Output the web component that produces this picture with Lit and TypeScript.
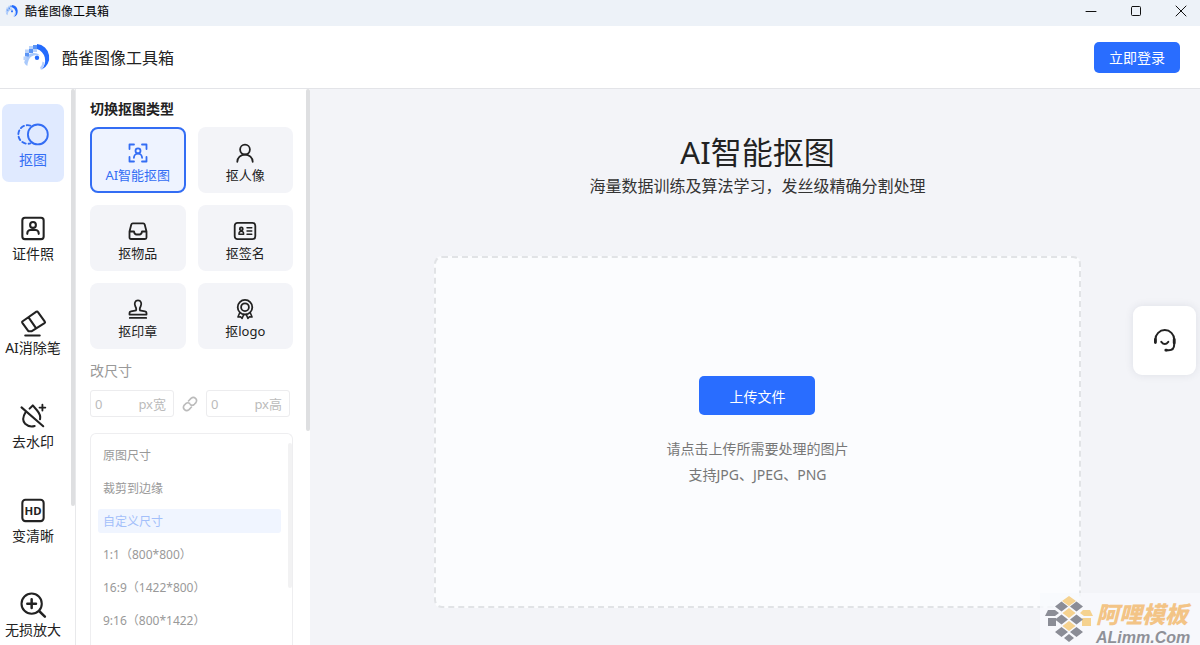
import { LitElement, html, css, svg } from "lit";
import { customElement, property, state } from "lit/decorators.js";
import { classMap } from "lit/directives/class-map.js";

const icons: Record<string, unknown> = {
  cutout: svg`<path d="M12 5.4A9 9 0 1 0 12 22.600" stroke-dasharray="3.600 2.700" /><circle cx="19.200" cy="14" r="9.600" />`,
  idphoto: svg`<rect x="4.2" y="3.7" width="20.6" height="20.6" rx="2.5" /><circle cx="14.5" cy="10.6" r="2.8" /><path d="M9 19.2v-.7a3 3 0 0 1 3-3h5a3 3 0 0 1 3 3v.7" />`,
  eraser: svg`<path d="M4.500 12.800 17.800 3.600q.9-.6 1.500.3l6.600 9.300q.6.900-.3 1.500L13.400 22.400H10L4.200 14.300q-.6-.900.3-1.500zM10.200 9l7.200 10.500M7 26.600h14" />`,
  nowater: svg`<path d="M11.200 6.400 14.300 3.300l4.200 4.900q3.800 4.600 2.800 8.400M7.300 9.900Q3 16.800 6.900 21q4 3.800 9.200 2.200 M3.400 5.200 24.400 23.400" /><path d="M23.600 2.600v5.600M20.800 5.400h5.600" stroke-width="1.8" />`,
  zoomin: svg`<circle cx="13.2" cy="13.2" r="9.8" /><path d="M13.2 9v8.4M9 13.2h8.4M20.4 20.3l5.600 5.400" stroke-width="2.4" />`,
  ai: svg`<path d="M1.500 6V1.500H6M14 1.500h4.500V6M18.500 14v4.500H14M6 18.500H1.500V14" /><circle cx="10" cy="7.800" r="2.500" /><path d="M5.900 14.800a4.100 4.300 0 0 1 8.200 0" />`,
  person: svg`<circle cx="10" cy="6.600" r="4.900" /><path d="M2.300 18.800a7.700 7.200 0 0 1 15.400 0" />`,
  inbox: svg`<path d="M1.500 10.500 3.300 3.500q.3-1.200 1.500-1.200h10.400q1.200 0 1.500 1.200l1.800 7v6q0 1.500-1.500 1.500H3q-1.500 0-1.500-1.500zM1.500 10.500H6q.5 3 2.500 3h3q2 0 2.500-3h4.500" />`,
  card: svg`<rect x="-.3" y="1.900" width="20.600" height="16.200" rx="2.800" /><circle cx="6.300" cy="7.900" r="1.500" /><path d="M3.900 13.300q0-3 2.400-3t2.400 3zM12 6.700h4.800M12 10h4.800M12 13.300h4.800" stroke-width="1.400" />`,
  stamp: svg`<path d="M8.200 10.800q.2-1.700-.9-3.500C5.800 4.500 7.200 1.300 10 1.300s4.200 3.200 2.700 6q-1.100 1.800-.9 3.500.1.800 1.200.9l4 .6q1.500.3 1.500 1.700v1.600h-17V14q0-1.400 1.500-1.700l4-.6q1.100-.1 1.200-.9zM1.800 18.900h16.400" />`,
  medal: svg`<circle cx="10" cy="8.200" r="7.300" /><circle cx="10" cy="8.200" r="3.900" /><path d="M4.800 13.600 2.900 18l2.700-.3 1.500 1.700 1.700-4M15.200 13.600l1.900 4.400-2.700-.3-1.500 1.700-1.700-4" stroke-width="1.500" />`,
};

@customElement("brand-mark")
export class BrandMark extends LitElement {
  static styles = css`
    :host { display: block; }
    svg { display: block; width: 100%; height: 100%; }
  `;

  render() {
    return html`<svg viewBox="0 0 30 30" aria-hidden="true">
      <path d="M15 2A13.600 13.600 0 0 1 19.500 27.800Q24.300 22 22.800 15.500 21 9.200 15 7z" fill="#246bfd" />
      <path d="M2.200 20.500Q3.200 13.500 8.500 11.400q5.500-1.600 9.700 2-5.400-1.400-9.200 1.300Q6 17.200 5.300 24 3 22.500 2.200 20.500z" fill="#a9c9fb" />
      <path d="M11 3h4v4h-4zM7 7h4v4H7zM3 11h4v3.500H3z" fill="#5b95f5" />
      <path d="M7 4h4v3H7zM11 7h4v3h-4zM3 7.500h4V11H3zM1.500 14.500h3V18h-3z" fill="#b8d2fb" />
      <circle cx="15" cy="15.800" r="2.200" fill="#246bfd" />
      <path d="M18 25.500q2.500-2.200 2.500-6l1.800 1q0 4.500-3.300 7.500z" fill="#b5cfff" />
    </svg>`;
  }
}

@customElement("scroll-thumb")
export class ScrollThumb extends LitElement {
  @property({ type: Number }) extent = 50;

  static styles = css`
    :host { display: block; flex: none; width: 4px; }
    .thumb { background: #dedfe1; border-radius: 2px; }
  `;

  render() {
    return html`<div class="thumb" style="height:${this.extent}%"></div>`;
  }
}

@customElement("app-root")
export class AppRoot extends LitElement {
  @state() private tool = "cutout";
  @state() private kind = "ai";
  @state() private size = "自定义尺寸";

  private tools = [
    ["cutout", "抠图"],
    ["idphoto", "证件照"],
    ["eraser", "AI消除笔"],
    ["nowater", "去水印"],
    ["hd", "变清晰"],
    ["zoomin", "无损放大"],
  ];

  private kinds = [
    ["ai", "AI智能抠图"],
    ["person", "抠人像"],
    ["inbox", "抠物品"],
    ["card", "抠签名"],
    ["stamp", "抠印章"],
    ["medal", "抠logo"],
  ];

  private sizes = ["原图尺寸", "裁剪到边缘", "自定义尺寸", "1:1（800*800）", "16:9（1422*800）", "9:16（800*1422）"];

  static styles = css`
    :host {
      display: flex;
      flex-direction: column;
      height: 100vh;
      overflow: hidden;
      position: relative;
      background: #fff;
      color: #222;
      font-family: "Noto Sans", "Noto Sans CJK SC", sans-serif;
      font-size: 14px;
    }
    * { box-sizing: border-box; }
    button, input { font: inherit; color: inherit; margin: 0; padding: 0; border: 0; background: none; }
    button { cursor: pointer; }
    h1, h2, p { margin: 0; font-weight: 400; }
    svg { display: block; fill: none; stroke: currentColor; stroke-linecap: round; stroke-linejoin: round; }

    .titlebar {
      flex: none;
      display: flex;
      align-items: center;
      height: 26px;
      padding: 0 3px 4px 5px;
      background: #edf2f8;
      color: #000;
      font-size: 12px;
    }
    .titlebar brand-mark { width: 14px; height: 14px; margin-right: 6px; }
    .controls { display: flex; margin-left: auto; gap: 13px; }
    .control { width: 32px; height: 22px; display: grid; place-items: center; }
    .control svg { width: 12px; height: 12px; stroke-width: 1; stroke: #111; }

    .header {
      flex: none;
      display: flex;
      align-items: center;
      height: 63px;
      padding: 0 20px 0 22px;
      border-bottom: 1px solid #e3e4e8;
    }
    .header brand-mark { width: 30px; height: 30px; margin-right: 10px; }
    .brand { font-size: 16px; }
    .primary { background: #296dff; color: #fff; border-radius: 5px; }
    .login { width: 86px; height: 31px; margin-left: auto; }

    .body { flex: 1; min-height: 0; display: flex; }
    .rail { flex: none; display: flex; width: 76px; border-right: 1px solid #e8e9eb; overflow: hidden; }
    .tools { flex: 1; display: flex; flex-direction: column; gap: 16px; padding: 15px 7px 0 2px; min-width: 0; }
    .tool {
      flex: none;
      display: flex;
      flex-direction: column;
      align-items: center;
      justify-content: center;
      height: 78px;
      padding-top: 4px;
      border-radius: 7px;
      white-space: nowrap;
      line-height: 20px;
    }
    .tool svg { width: 30px; height: 30px; stroke-width: 2; overflow: visible; }
    .tool.on { background: #e0eaff; color: #336df4; }
    .tool.on svg { stroke-width: 1.8; }
    .hd { stroke: none; fill: currentColor; font-size: 11px; font-weight: 700; }

    .panel { flex: none; display: flex; width: 234px; overflow: hidden; }
    .settings { flex: 1; display: flex; flex-direction: column; padding: 10px 13px 0 14px; min-width: 0; }
    .caption { font-size: 14px; line-height: 20px; font-weight: 600; }
    .kinds { display: grid; grid-template-columns: 1fr 1fr; gap: 12px; margin-top: 8px; }
    .kind {
      display: flex;
      flex-direction: column;
      align-items: center;
      justify-content: center;
      gap: 2px;
      height: 66px;
      padding-top: 7px;
      border: 2px solid transparent;
      border-radius: 8px;
      background: #f3f4f8;
      font-size: 13px;
      line-height: 20px;
      white-space: nowrap;
    }
    .kind svg { width: 20px; height: 20px; stroke-width: 1.8; overflow: visible; }
    .kind.on { border-color: #336df4; background: #eef3ff; color: #336df4; }
    .muted { color: #999; font-weight: 400; margin-top: 12px; }
    .dims { display: flex; align-items: center; justify-content: space-between; margin: 9px 3px 0 0; color: #bbb; }
    .dim {
      display: flex;
      align-items: center;
      width: 84px;
      height: 27px;
      padding: 0 7px 0 4px;
      border: 1px solid #ececee;
      border-radius: 3px;
      font-size: 13px;
    }
    .dim input { flex: 1; min-width: 0; outline: 0; }
    .dims svg { width: 16px; height: 16px; stroke-width: 1.6; }
    .sizes {
      flex: 1;
      display: flex;
      min-height: 0;
      margin-top: 16px;
      padding: 9px 0 0 7px;
      border: 1px solid #eeeef0;
      border-bottom: 0;
      border-radius: 6px 6px 0 0;
      overflow: hidden;
    }
    .sizes scroll-thumb { opacity: 0.4; }
    .options { flex: 1; display: flex; flex-direction: column; gap: 9px; margin-right: 7px; }
    .option {
      flex: none;
      height: 24px;
      padding-left: 5px;
      border-radius: 3px;
      color: #999;
      font-size: 12px;
      text-align: left;
      white-space: nowrap;
    }
    .option.on { background: #f0f5ff; color: #a3bffa; }

    .main {
      flex: 1;
      min-width: 0;
      display: flex;
      flex-direction: column;
      align-items: center;
      padding: 41px 0 37px 5px;
      background: #f3f4f8;
    }
    .headline { font-size: 31px; line-height: 44px; }
    .sub { font-size: 16px; line-height: 24px; color: #333; }
    .drop {
      flex: 1;
      width: 73%;
      margin-top: 58px;
      display: flex;
      flex-direction: column;
      align-items: center;
      justify-content: center;
      border: 2px dashed #e1e3e6;
      border-radius: 8px;
      background: #fbfcfe;
    }
    .upload { width: 116px; height: 39px; }
    .hint { line-height: 26px; color: #777; text-align: center; }
    .hints { margin-top: 21px; }

    .support {
      position: absolute;
      right: 4px;
      top: 306px;
      width: 63px;
      height: 69px;
      display: grid;
      place-items: center;
      border-radius: 9px;
      background: #fff;
      box-shadow: 0 0 8px rgba(40, 50, 80, 0.1);
    }
    .support svg { width: 26px; height: 26px; stroke-width: 2; }

    .watermark {
      position: absolute;
      right: 0;
      bottom: 0;
      display: flex;
      gap: 3px;
      padding: 2px 8px 0 5px;
      height: 52px;
      width: 160px;
      background: rgba(248, 249, 252, 0.8);
    }
    .watermark svg { width: 48px; height: 48px; stroke: none; flex: none; }
    .wm-cn { font-family: "Noto Sans CJK SC", sans-serif; font-size: 23px; line-height: 34px; font-weight: 800; font-style: italic; color: #f3c486; white-space: nowrap; margin-top: 1px; }
    .wm-en { font-family: "Liberation Sans", sans-serif; font-size: 16px; line-height: 15px; font-weight: 700; font-style: italic; color: #8f9198; }
  `;

  private toolIcon(name: string) {
    if (name === "hd") {
      return html`<svg viewBox="0 0 29 29" aria-hidden="true"><rect x="4.2" y="3.7" width="20.6" height="20.6" rx="3" /><text class="hd" x="14.5" y="18" text-anchor="middle">HD</text></svg>`;
    }
    return html`<svg viewBox="0 0 29 29" aria-hidden="true">${icons[name]}</svg>`;
  }

  render() {
    return html`
      <div class="titlebar">
        <brand-mark></brand-mark>
        <span>酷雀图像工具箱</span>
        <div class="controls">
          <button class="control" aria-label="最小化"><svg viewBox="0 0 12 12"><path d="M1 6.500h10" /></svg></button>
          <button class="control" aria-label="最大化"><svg viewBox="0 0 12 12"><rect x="1.500" y="1.500" width="9" height="9" rx="1" /></svg></button>
          <button class="control" aria-label="关闭"><svg viewBox="0 0 12 12"><path d="M1 1l10 10M11 1 1 11" /></svg></button>
        </div>
      </div>
      <header class="header">
        <brand-mark></brand-mark>
        <span class="brand">酷雀图像工具箱</span>
        <button class="primary login">立即登录</button>
      </header>
      <div class="body">
        <div class="rail">
          <nav class="tools">
            ${this.tools.map(
              ([id, label]) => html`<button class=${classMap({ tool: true, on: this.tool === id })} @click=${() => (this.tool = id)}>
                ${this.toolIcon(id)}<span>${label}</span>
              </button>`
            )}
          </nav>
          <scroll-thumb extent="75"></scroll-thumb>
        </div>
        <aside class="panel">
          <div class="settings">
            <h2 class="caption">切换抠图类型</h2>
            <div class="kinds">
              ${this.kinds.map(
                ([id, label]) => html`<button class=${classMap({ kind: true, on: this.kind === id })} @click=${() => (this.kind = id)}>
                  <svg viewBox="0 0 20 20" aria-hidden="true">${icons[id]}</svg><span>${label}</span>
                </button>`
              )}
            </div>
            <h2 class="caption muted">改尺寸</h2>
            <div class="dims">
              <label class="dim"><input type="text" inputmode="numeric" .value=${"0"} /><span>px宽</span></label>
              <svg viewBox="0 0 16 16" aria-hidden="true"><path d="M6.500 5 9 2.400q2.400-2 4.500 0t.2 4.500L12.300 8.300q-2 1.800-4 .3M9.500 11 7 13.600q-2.400 2-4.500 0t-.2-4.500L3.700 7.700q2-1.800 4-.3" /></svg>
              <label class="dim"><input type="text" inputmode="numeric" .value=${"0"} /><span>px高</span></label>
            </div>
            <div class="sizes">
              <div class="options">
                ${this.sizes.map(
                  (s) => html`<button class=${classMap({ option: true, on: this.size === s })} @click=${() => (this.size = s)}>${s}</button>`
                )}
              </div>
              <scroll-thumb extent="72"></scroll-thumb>
            </div>
          </div>
          <scroll-thumb extent="61.5"></scroll-thumb>
        </aside>
        <main class="main">
          <h1 class="headline">AI智能抠图</h1>
          <p class="sub">海量数据训练及算法学习，发丝级精确分割处理</p>
          <section class="drop">
            <button class="primary upload">上传文件</button>
            <div class="hints">
              <p class="hint">请点击上传所需要处理的图片</p>
              <p class="hint">支持JPG、JPEG、PNG</p>
            </div>
          </section>
        </main>
      </div>
      <button class="support" aria-label="在线客服">
        <svg viewBox="0 0 26 26"><path d="M3.400 13.500v-2a9.300 9.300 0 0 1 18.800 0V16.500q0 5.700-5.500 5.700h-2.500M9.300 13.800q3.500 4.500 7 0" /><path d="M3.400 11.500v3M22.200 11.500v3.500M13.800 22.200h.6" stroke-width="2.800" /></svg>
      </button>
      <div class="watermark">
        <svg viewBox="0 0 48 48" aria-hidden="true">
          <g fill="#f5d28f"><path d="M24 1l7 5-7 5-7-5zM24 13l6.500 5-6.500 5-6.500-5zM24 26l6.500 5-6.500 5-6.500-5zM17 32l0 0zM38 15h7l3 6h-9l-4-3zM37 23h9v8h-9z" /></g>
          <g fill="#8b8d96"><path d="M16.500 6.500l6.500 5-6.500 5-6.500-5zM31.500 6.500l6.500 5-6.500 5-6.500-5zM3 15h7l4 3-4 3H0zM3 23h8v8H3zM16.500 19.500l6.500 5-6.500 5-6.500-5zM31.500 19.500l6.500 5-6.500 5-6.500-5zM16.500 32l6.500 5-6.500 5-6.500-5zM31.500 32l6.500 5-6.500 5-6.500-5zM24 39l5 4-5 4-5-4z" /></g>
        </svg>
        <div>
          <div class="wm-cn">阿哩模板</div>
          <div class="wm-en">ALimm.Com</div>
        </div>
      </div>
    `;
  }
}
